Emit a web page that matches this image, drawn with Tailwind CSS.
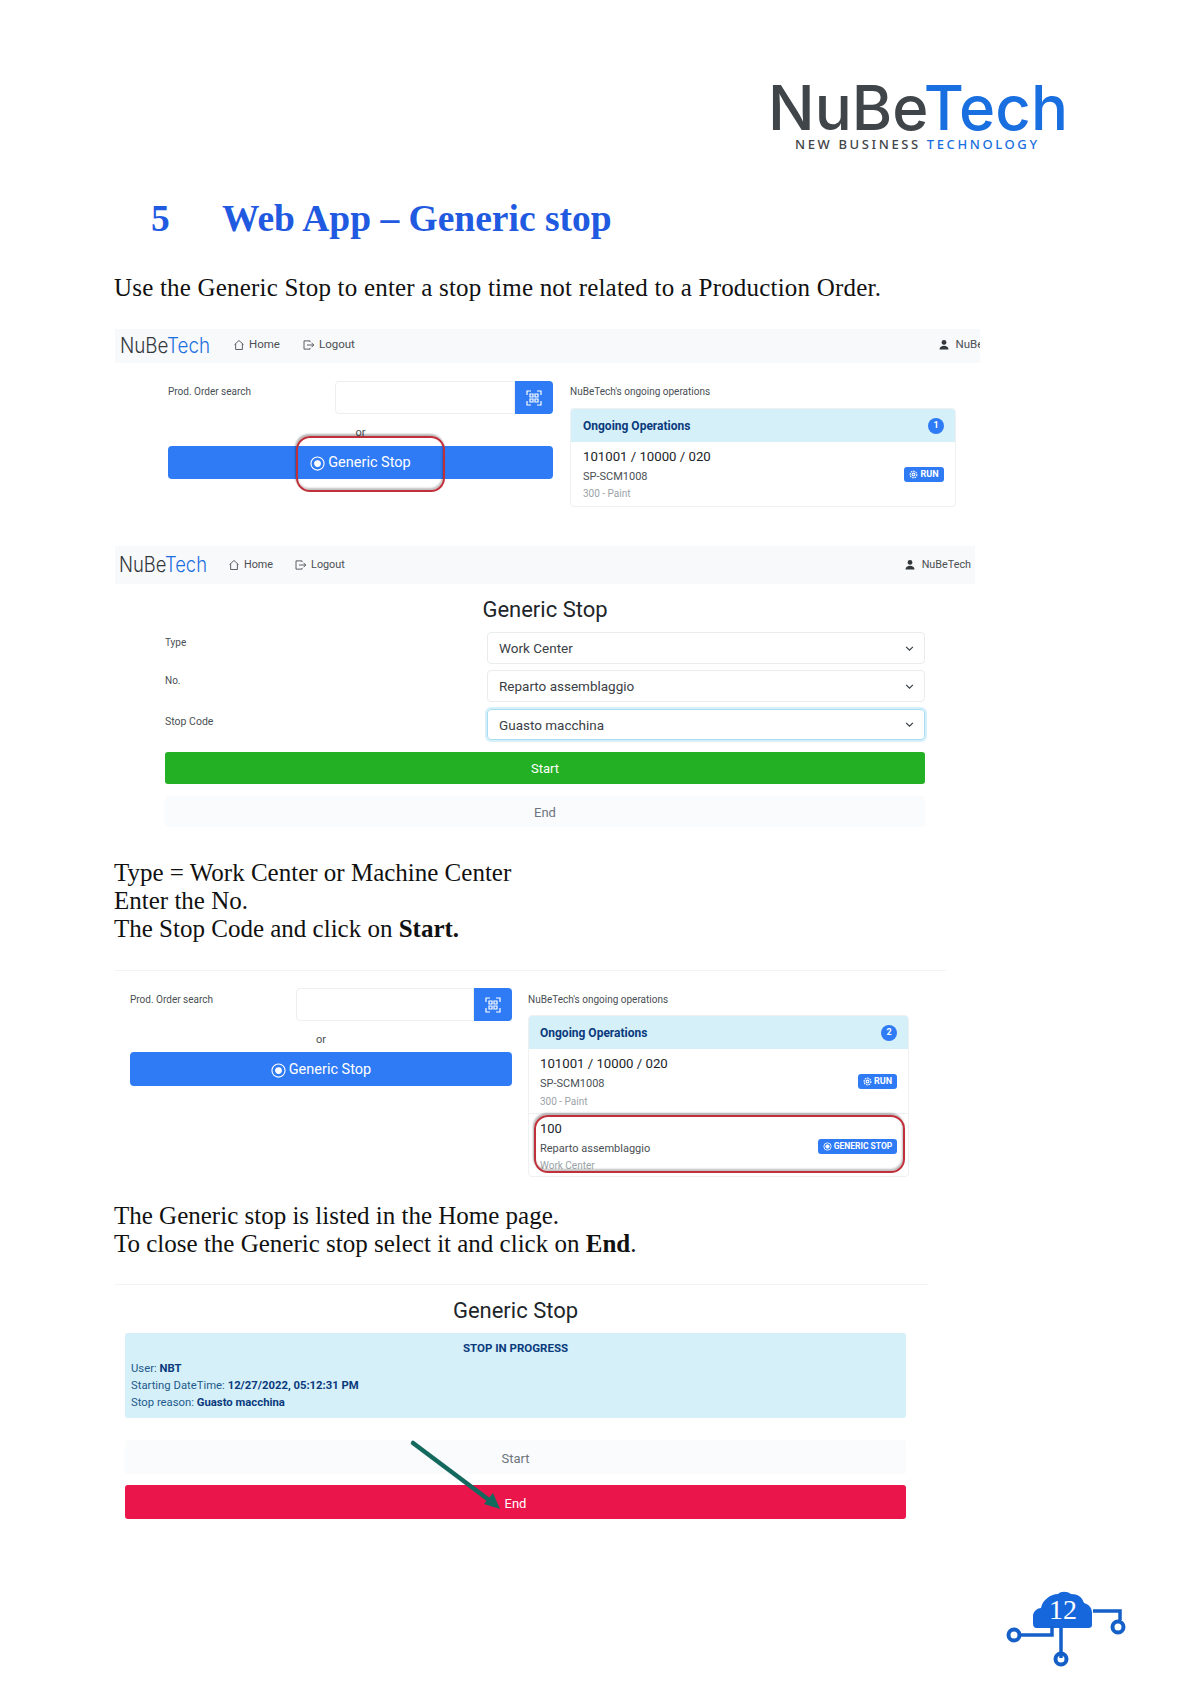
<!doctype html>
<html lang="en">
<head>
<meta charset="UTF-8" />
<title>Web App - Generic stop</title>
<script src="https://cdn.jsdelivr.net/npm/@tailwindcss/browser@4"></script>
</head>
<body class="bg-white">
<div class="relative w-[1192px] h-[1685px] overflow-hidden bg-white font-['Roboto',sans-serif] text-[#212529]">

  <!-- Document header -->
  <header class="pt-[70px] pl-[760px] h-[160px]">
    <svg width="320" height="90" viewBox="0 0 320 90" class="block">
      <text x="8" y="60" font-family="Inter" font-size="62" font-weight="500" textLength="300" lengthAdjust="spacingAndGlyphs"><tspan fill="#3f4549">NuBe</tspan><tspan fill="#1a6fe0">Tech</tspan></text>
      <text x="35" y="79" font-family="Noto Sans" font-size="13" font-weight="500" fill="#3f4549" textLength="242"><tspan fill="#3f4549">NEW BUSINESS </tspan><tspan fill="#1a6fe0">TECHNOLOGY</tspan></text>
    </svg>
  </header>

  <h1 class="mt-[37px] h-[44px] flex items-center pl-[151px] font-['Liberation_Serif',serif] font-bold text-[37.5px] text-[#1f5ae0]">
    <span class="w-[71px]">5</span><span>Web App – Generic stop</span>
  </h1>
  <p class="mt-[32px] h-[30px] leading-[30px] pl-[114px] font-['Liberation_Serif',serif] text-[25px] tracking-[0.2px] text-[#111]">Use the Generic Stop to enter a stop time not related to a Production Order.</p>

  <!-- Screen 1: home page -->
  <nav class="mt-[26px] ml-[115px] w-[865px] h-[34px] bg-[#f8f9fa] flex items-center overflow-hidden text-[11.5px] text-[#4a4f54]">
    <svg width="90" height="28" viewBox="0 0 90 28" class="ml-[5px] shrink-0">
      <text x="0" y="21" font-family="Inter" font-size="21" font-weight="300" textLength="90" lengthAdjust="spacingAndGlyphs"><tspan fill="#33383c">NuBe</tspan><tspan fill="#1a6fe0">Tech</tspan></text>
    </svg>
    <svg width="12" height="12" viewBox="0 0 16 16" fill="none" stroke="#4a4f54" stroke-width="1.2" class="ml-[23px] mb-[2px] shrink-0"><path d="M2 7.5 8 2l6 5.5M3.5 6.5V14h9V6.5"/></svg>
    <span class="ml-[4px] mb-[2px] shrink-0">Home</span>
    <svg width="13" height="12" viewBox="0 0 16 16" fill="none" stroke="#4a4f54" stroke-width="1.2" class="ml-[22px] mb-[2px] shrink-0"><path d="M10 4V2.5H2v11h8V12M6 8h9M12 5l3 3-3 3"/></svg>
    <span class="ml-[4px] mb-[2px] shrink-0">Logout</span>
    <svg width="12" height="12" viewBox="0 0 16 16" fill="#33383c" class="ml-auto mb-[2px] shrink-0"><circle cx="8" cy="4.5" r="3.2"/><path d="M2 14c0-3.5 3-5 6-5s6 1.5 6 5z"/></svg>
    <span class="ml-[5px] mb-[2px] mr-[-28px] shrink-0">NuBeTech</span>
  </nav>

  <section class="mt-[18px] ml-[168px] w-[788px] h-[126px] grid grid-cols-[385px_386px] gap-x-[17px] text-[10px] text-[#4a4f54]">
    <div>
      <div class="flex h-[33px]">
        <span class="w-[167px] pt-[3px]">Prod. Order search</span>
        <div class="w-[180px] border border-[#eceef0] rounded-l-[4px]"></div>
        <div class="w-[38px] bg-[#2f7bf6] rounded-r-[4px] flex items-center justify-center">
          <svg width="16" height="16" viewBox="0 0 16 16" fill="none" stroke="#fff" stroke-width="1.2"><path d="M1 5V1h4M11 1h4v4M15 11v4h-4M5 15H1v-4"/><path d="M4 4h3v3H4zM9 4h3v3H9zM4 9h3v3H4zM9 9h3v3H9z"/></svg>
        </div>
      </div>
      <div class="h-[32px] pt-[11px] text-center leading-[16px] text-[11px]">or</div>
      <button class="w-full h-[33px] pt-[1px] bg-[#2f7bf6] rounded-[4px] text-white text-[14.5px] flex items-center justify-center gap-[3px]">
        <svg width="15" height="15" viewBox="0 0 16 16" fill="none" stroke="#fff" stroke-width="1.2"><circle cx="8" cy="8" r="7"/><circle cx="8" cy="8" r="3" fill="#fff"/></svg>
        Generic Stop
      </button>
    </div>
    <div>
      <div class="h-[27px] pt-[3px]">NuBeTech's ongoing operations</div>
      <div class="h-[99px] border border-[#eef0f2] rounded-[4px] overflow-hidden">
        <div class="h-[34px] -mt-px -mx-px pt-[1px] bg-[#d5f0f9] flex items-center justify-between pl-[13px] pr-[12px] font-bold text-[12px] text-[#0a3a7c]">
          <span>Ongoing Operations</span>
          <span class="w-[16px] h-[16px] rounded-full bg-[#2f7bf6] text-white text-[9px] flex items-center justify-center">1</span>
        </div>
        <div class="relative pl-[12px] pt-[5px]">
          <div class="text-[13.2px] leading-[20px] text-[#212529]">101001 / 10000 / 020</div>
          <div class="text-[11px] leading-[16px] mt-[2px]">SP-SCM1008</div>
          <div class="text-[10px] leading-[16px] mt-[1px] text-[#9aa3a8]">300 - Paint</div>
          <span class="absolute right-[11px] top-[25px] h-[15px] w-[40px] bg-[#2f7bf6] rounded-[3px] text-white text-[9px] font-bold flex items-center justify-center gap-[2px]">
            <svg width="9" height="9" viewBox="0 0 16 16" fill="none" stroke="#fff" stroke-width="2"><circle cx="8" cy="8" r="6" stroke-dasharray="3 1.5"/><circle cx="8" cy="8" r="2.5"/></svg>RUN
          </span>
        </div>
      </div>
    </div>
  </section>

  <!-- Screen 2: generic stop form -->
  <nav class="mt-[39px] ml-[115px] w-[860px] h-[38px] bg-[#f8f9fa] flex items-center text-[10.8px] text-[#4a4f54]">
    <svg width="88" height="28" viewBox="0 0 88 28" class="ml-[4px] shrink-0">
      <text x="0" y="21" font-family="Inter" font-size="21" font-weight="300" textLength="88" lengthAdjust="spacingAndGlyphs"><tspan fill="#33383c">NuBe</tspan><tspan fill="#1a6fe0">Tech</tspan></text>
    </svg>
    <svg width="12" height="12" viewBox="0 0 16 16" fill="none" stroke="#4a4f54" stroke-width="1.2" class="ml-[21px] shrink-0"><path d="M2 7.5 8 2l6 5.5M3.5 6.5V14h9V6.5"/></svg>
    <span class="ml-[4px]">Home</span>
    <svg width="13" height="12" viewBox="0 0 16 16" fill="none" stroke="#4a4f54" stroke-width="1.2" class="ml-[21px] shrink-0"><path d="M10 4V2.5H2v11h8V12M6 8h9M12 5l3 3-3 3"/></svg>
    <span class="ml-[4px]">Logout</span>
    <svg width="12" height="12" viewBox="0 0 16 16" fill="#33383c" class="ml-auto shrink-0"><circle cx="8" cy="4.5" r="3.2"/><path d="M2 14c0-3.5 3-5 6-5s6 1.5 6 5z"/></svg>
    <span class="ml-[6px] mr-[4px]">NuBeTech</span>
  </nav>

  <section class="mt-[11px] ml-[165px] w-[760px]">
    <h2 class="h-[30px] leading-[30px] text-center text-[22px] text-[#212529]">Generic Stop</h2>
    <div class="mt-[7px] flex flex-col gap-[6px] text-[13.5px] text-[#3a4045]">
      <div class="flex">
        <span class="w-[322px] pt-[3px] text-[10px] text-[#4a4f54]">Type</span>
        <div class="flex-1 h-[32px] border border-[#e9ecef] rounded-[4px] flex items-center justify-between pl-[11px] pr-[10px]"><span class="pt-[1px]">Work Center</span>
          <svg width="9" height="9" viewBox="0 0 16 16" fill="none" stroke="#343a40" stroke-width="2"><path d="m2 5 6 6 6-6"/></svg></div>
      </div>
      <div class="flex">
        <span class="w-[322px] pt-[3px] text-[10px] text-[#4a4f54]">No.</span>
        <div class="flex-1 h-[32px] border border-[#e9ecef] rounded-[4px] flex items-center justify-between pl-[11px] pr-[10px]"><span class="pt-[1px]">Reparto assemblaggio</span>
          <svg width="9" height="9" viewBox="0 0 16 16" fill="none" stroke="#343a40" stroke-width="2"><path d="m2 5 6 6 6-6"/></svg></div>
      </div>
      <div class="flex mt-[1px]">
        <span class="w-[322px] pt-[5px] text-[10.5px] text-[#4a4f54]">Stop Code</span>
        <div class="flex-1 h-[31px] border border-[#a8dcf2] rounded-[4px] ring-2 ring-[#d5f0f9] flex items-center justify-between pl-[11px] pr-[10px]"><span class="pt-[1px]">Guasto macchina</span>
          <svg width="9" height="9" viewBox="0 0 16 16" fill="none" stroke="#343a40" stroke-width="2"><path d="m2 5 6 6 6-6"/></svg></div>
      </div>
    </div>
    <button class="mt-[12px] w-full h-[32px] pt-[1px] bg-[#23b024] rounded-[3px] text-white text-[13px] block">Start</button>
    <button class="mt-[12px] w-full h-[31px] pt-[3px] bg-[#fafbfc] rounded-[3px] text-[#6c757d] text-[13px] block">End</button>
  </section>

  <div class="mt-[32px] ml-[114px] font-['Liberation_Serif',serif] text-[25px] leading-[28px] text-[#111]">
    <p>Type = Work Center or Machine Center</p>
    <p>Enter the No.</p>
    <p>The Stop Code and click on <b>Start.</b></p>
  </div>

  <!-- Screen 3: home with the generic stop listed -->
  <div class="mt-[27px] ml-[115px] w-[831px] h-px bg-[#f1f3f5]"></div>
  <section class="mt-[17px] ml-[130px] w-[779px] h-[189px] grid grid-cols-[382px_381px] gap-x-[16px] text-[10px] text-[#4a4f54]">
    <div>
      <div class="flex h-[33px]">
        <span class="w-[166px] pt-[4px]">Prod. Order search</span>
        <div class="w-[178px] border border-[#eceef0] rounded-l-[4px]"></div>
        <div class="w-[38px] bg-[#2f7bf6] rounded-r-[4px] flex items-center justify-center">
          <svg width="16" height="16" viewBox="0 0 16 16" fill="none" stroke="#fff" stroke-width="1.2"><path d="M1 5V1h4M11 1h4v4M15 11v4h-4M5 15H1v-4"/><path d="M4 4h3v3H4zM9 4h3v3H9zM4 9h3v3H4zM9 9h3v3H9z"/></svg>
        </div>
      </div>
      <div class="h-[31px] pt-[11px] text-center leading-[16px] text-[11px]">or</div>
      <button class="w-full h-[34px] pt-[2px] bg-[#2f7bf6] rounded-[4px] text-white text-[14.5px] flex items-center justify-center gap-[3px]">
        <svg width="15" height="15" viewBox="0 0 16 16" fill="none" stroke="#fff" stroke-width="1.2"><circle cx="8" cy="8" r="7"/><circle cx="8" cy="8" r="3" fill="#fff"/></svg>
        Generic Stop
      </button>
    </div>
    <div>
      <div class="h-[27px] pt-[4px]">NuBeTech's ongoing operations</div>
      <div class="h-[162px] border border-[#eef0f2] rounded-[4px] overflow-hidden">
        <div class="h-[34px] -mt-px -mx-px pt-[2px] bg-[#d5f0f9] flex items-center justify-between pl-[12px] pr-[12px] font-bold text-[12px] text-[#0a3a7c]">
          <span>Ongoing Operations</span>
          <span class="w-[16px] h-[16px] rounded-full bg-[#2f7bf6] text-white text-[9px] flex items-center justify-center">2</span>
        </div>
        <div class="relative h-[65px] pl-[11px] pt-[5px] border-b border-[#eef0f2]">
          <div class="text-[13.2px] leading-[20px] text-[#212529]">101001 / 10000 / 020</div>
          <div class="text-[11px] leading-[16px] mt-[2px]">SP-SCM1008</div>
          <div class="text-[10px] leading-[16px] mt-[2px] text-[#9aa3a8]">300 - Paint</div>
          <span class="absolute right-[11px] top-[25px] h-[15px] w-[39px] bg-[#2f7bf6] rounded-[3px] text-white text-[9px] font-bold flex items-center justify-center gap-[2px]">
            <svg width="9" height="9" viewBox="0 0 16 16" fill="none" stroke="#fff" stroke-width="2"><circle cx="8" cy="8" r="6" stroke-dasharray="3 1.5"/><circle cx="8" cy="8" r="2.5"/></svg>RUN
          </span>
        </div>
        <div class="relative pl-[11px] pt-[5px]">
          <div class="text-[13px] leading-[20px] text-[#212529]">100</div>
          <div class="text-[11px] leading-[16px] mt-[2px]">Reparto assemblaggio</div>
          <div class="text-[10px] leading-[16px] mt-[1px] text-[#9aa3a8]">Work Center</div>
          <span class="absolute right-[11px] top-[25px] h-[15px] w-[79px] bg-[#2f7bf6] rounded-[3px] text-white text-[8.5px] font-bold flex items-center justify-center gap-[2px] whitespace-nowrap">
            <svg width="9" height="9" viewBox="0 0 16 16" fill="none" stroke="#fff" stroke-width="1.5"><circle cx="8" cy="8" r="6.5"/><circle cx="8" cy="8" r="3" fill="#fff"/></svg>GENERIC STOP
          </span>
        </div>
      </div>
    </div>
  </section>

  <div class="mt-[25px] ml-[114px] font-['Liberation_Serif',serif] text-[25px] leading-[28px] text-[#111]">
    <p>The Generic stop is listed in the Home page.</p>
    <p>To close the Generic stop select it and click on <b>End</b>.</p>
  </div>

  <!-- Screen 4: stop in progress -->
  <div class="mt-[26px] ml-[115px] w-[813px] h-px bg-[#f1f3f5]"></div>
  <section class="mt-[11px] ml-[125px] w-[781px]">
    <h2 class="h-[30px] leading-[30px] text-center text-[22px] text-[#212529]">Generic Stop</h2>
    <div class="mt-[7px] h-[85px] bg-[#d5f0f9] rounded-[3px] px-[6px] pt-[7px] text-[11.3px] leading-[17px] text-[#1d5a8a]">
      <p class="text-center font-bold text-[11.5px] text-[#0a3a7c] mb-[3px]">STOP IN PROGRESS</p>
      <p>User: <b class="text-[#0a3a7c]">NBT</b></p>
      <p>Starting DateTime: <b class="text-[#0a3a7c]">12/27/2022, 05:12:31 PM</b></p>
      <p>Stop reason: <b class="text-[#0a3a7c]">Guasto macchina</b></p>
    </div>
    <button class="mt-[22px] w-full h-[34px] pt-[3px] bg-[#fafbfc] rounded-[3px] text-[#6c757d] text-[13px] block">Start</button>
    <button class="mt-[11px] w-full h-[34px] pt-[3px] bg-[#e9154b] rounded-[3px] text-white text-[13px] block">End</button>
  </section>

  <!-- Page number badge -->
  <div class="relative mt-[66px] ml-[1005px] w-[125px] h-[85px]">
    <svg width="125" height="85" viewBox="0 0 125 85" fill="none" class="block">
      <path d="M32 43c-3 0-4-2-4-5v-7c0-5 5-8 8-8 1-7 9-14 17-14 3-3 9-3 13 0 7 0 11 3 13 9 4 1 8 4 8 10v12c0 2-1 3-4 3z" fill="#1667dc"/>
      <path d="M14 50h33v-9M56 43v30M88 26h27v9" stroke="#1560c8" stroke-width="3.5"/>
      <circle cx="9" cy="50" r="5.5" stroke="#1560c8" stroke-width="4"/>
      <circle cx="56" cy="74" r="5.5" stroke="#1560c8" stroke-width="4"/>
      <circle cx="113" cy="42" r="5.5" stroke="#1560c8" stroke-width="4"/>
    </svg>
    <span class="absolute left-[42px] top-[9px] w-[32px] text-center font-['Liberation_Serif',serif] text-[28px] leading-[32px] text-white">12</span>
  </div>

  <!-- Annotations drawn on top of the screens -->
  <div class="absolute left-[296px] top-[436px] w-[149px] h-[56px] border-2 border-[#c0303a] rounded-[14px] shadow-[-1px_-2px_2px_rgba(0,0,0,0.3),inset_-1px_-2px_2px_rgba(0,0,0,0.25)]"></div>
  <div class="absolute left-[534px] top-[1115px] w-[371px] h-[58px] border-2 border-[#c0303a] rounded-[14px] shadow-[-1px_-2px_2px_rgba(0,0,0,0.3),inset_-1px_-2px_2px_rgba(0,0,0,0.25)]"></div>
  <svg class="absolute left-[403px] top-[1437px]" width="110" height="85" viewBox="0 0 110 85" fill="none">
    <path d="M10 6 90 66" stroke="#14695f" stroke-width="4.5" stroke-linecap="round"/>
    <path d="M97 72 81 67 90 56z" fill="#14695f"/>
  </svg>
</div>
</body>
</html>
